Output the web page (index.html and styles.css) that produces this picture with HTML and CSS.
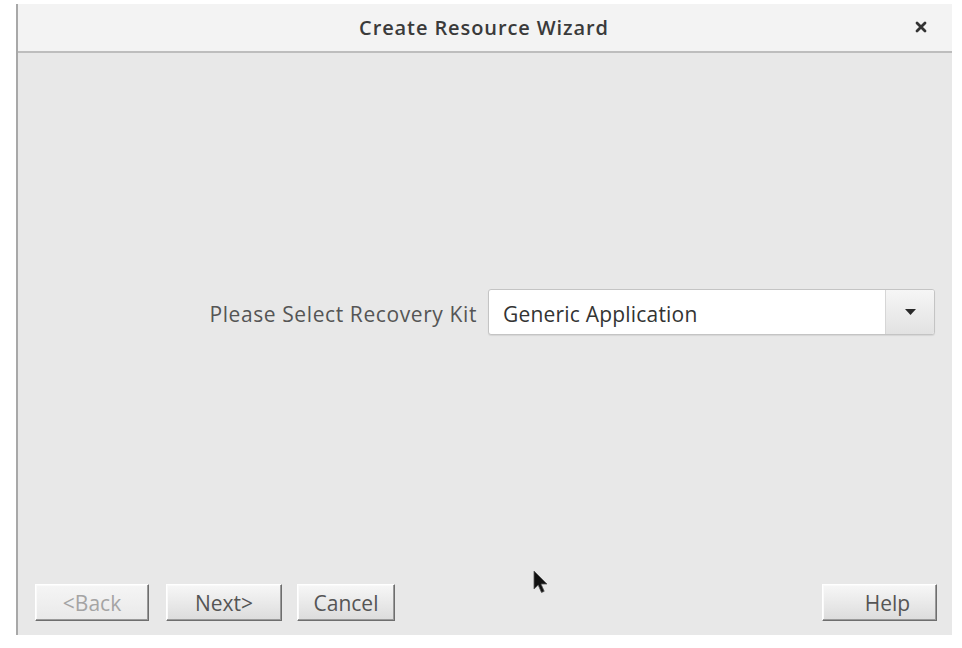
FILE: index.html
```html
<!DOCTYPE html>
<html>
<head>
<meta charset="utf-8">
<link rel="stylesheet" href="styles.css">
</head>
<body>
<div class="window">
  <div class="titlebar">
    <span class="title">Create Resource Wizard</span>
    <svg class="close" width="14" height="14" viewBox="0 0 14 14"><path d="M3 3L11 11M11 3L3 11" stroke="#333" stroke-width="2.8" stroke-linecap="round"/></svg>
  </div>
  <div class="main">
    <div class="form-row">
      <span class="label">Please Select Recovery Kit</span>
      <div class="combo">
        <span class="combo-text">Generic Application</span>
        <span class="combo-btn"><svg width="11" height="6" viewBox="0 0 11 6"><path d="M0 0H11L5.5 6Z" fill="#2a2a2a"/></svg></span>
      </div>
    </div>
  </div>
  <div class="footer">
    <button class="btn btn-back" disabled>&lt;Back</button>
    <button class="btn btn-next">Next&gt;</button>
    <button class="btn btn-cancel">Cancel</button>
    <span class="spacer"></span>
    <button class="btn btn-help">Help</button>
  </div>
  <svg class="cursor" width="15" height="25" viewBox="0 0 15 25"><path d="M1 1V19L5.2 15L8.5 22.5L11.2 21.3L8 14H14Z" fill="#111" stroke="#555" stroke-width="0.8"/></svg>
</div>
</body>
</html>
```

FILE: styles.css
```css
html, body {
  margin: 0;
  padding: 0;
  background: #ffffff;
}
body {
  font-family: "Open Sans", "Noto Sans", sans-serif;
}
.window {
  position: relative;
  margin: 4px 0 0 16px;
  width: 936px;
  height: 631px;
  display: flex;
  flex-direction: column;
  background: #e8e8e8;
  border-left: 2px solid #a8a8a8;
  box-sizing: border-box;
}
.titlebar {
  height: 49px;
  box-sizing: border-box;
  background: #f3f3f3;
  border-bottom: 2px solid #bdbdbd;
  display: flex;
  align-items: center;
  justify-content: center;
  position: relative;
}
.title {
  font-size: 20px;
  font-weight: 600;
  color: #3a3a3a;
  letter-spacing: 0.9px;
  margin-right: 2px;
}
.close {
  position: absolute;
  right: 24px;
  top: 16px;
}
.main {
  flex: 1;
  display: flex;
  align-items: center;
  justify-content: flex-end;
  padding: 0 17px 13px 0;
}
.form-row {
  display: flex;
  align-items: center;
  gap: 11px;
}
.label {
  font-size: 21px;
  color: #555555;
  letter-spacing: 0.6px;
  padding-top: 4px;
}
.combo {
  width: 447px;
  height: 46px;
  box-sizing: border-box;
  display: flex;
  background: #ffffff;
  border: 1px solid #c4c4c4;
  border-radius: 3px;
  box-shadow: 0 1px 1px rgba(0,0,0,0.08);
  overflow: hidden;
}
.combo-text {
  flex: 1;
  display: flex;
  align-items: center;
  padding-left: 14px;
  padding-top: 3px;
  font-size: 21px;
  letter-spacing: 0.2px;
  color: #333333;
}
.combo-btn {
  width: 48px;
  display: flex;
  align-items: center;
  justify-content: center;
  background: linear-gradient(#f6f6f6, #e2e2e2);
  border-left: 1px solid #d6d6d6;
}
.footer {
  display: flex;
  align-items: flex-start;
  padding: 0 15px 14px 17px;
  height: 51px;
  box-sizing: border-box;
}
.spacer {
  flex: 1;
}
.btn {
  height: 37px;
  box-sizing: border-box;
  font-family: "Open Sans", "Noto Sans", sans-serif;
  font-size: 21px;
  color: #555555;
  background: linear-gradient(#f7f7f7, #dcdcdc);
  border: 1px solid;
  border-color: #ffffff #6e6e6e #6e6e6e #ffffff;
  box-shadow: inset -1px -1px 0 #9a9a9a, inset 1px 1px 0 #fafafa;
  padding: 2px 0 0 0;
  line-height: 1;
}
.btn-back {
  width: 114px;
  color: #a4a4a4;
  background: linear-gradient(#f5f5f5, #e9e9e9);
}
.btn-next {
  width: 116px;
  margin-left: 17px;
}
.btn-cancel {
  width: 98px;
  margin-left: 15px;
}
.btn-help {
  width: 115px;
  padding-left: 16px;
}
.cursor {
  position: absolute;
  left: 515px;
  top: 566px;
}
```
